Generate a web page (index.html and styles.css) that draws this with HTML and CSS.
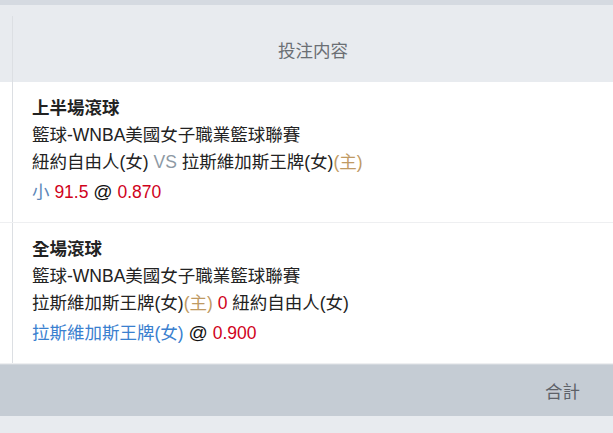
FILE: index.html
```html
<!DOCTYPE html>
<html lang="zh-Hant">
<head>
    <meta charset="UTF-8">
    <meta name="viewport" content="width=device-width, initial-scale=1.0">
    <title>投注内容</title>
    <link rel="stylesheet" href="styles.css">
</head>
<body>
    <div class="top-strip"></div>
    <div class="bet-table">
        <div class="bet-head">
            <div class="side"></div>
            <div class="head-title">投注内容</div>
        </div>

        <div class="bet-row">
            <div class="side"></div>
            <div class="bet-cell">
                <div class="bet-type">上半場滾球</div>
                <div>籃球-WNBA美國女子職業籃球聯賽</div>
                <div>紐約自由人(女) <span class="vs">VS</span> 拉斯維加斯王牌(女)<span class="home">(主)</span></div>
                <div class="odds"><span class="pick-small">小</span> <span class="red">91.5</span> <span class="at">@</span> <span class="red">0.870</span></div>
            </div>
        </div>

        <div class="bet-row">
            <div class="side"></div>
            <div class="bet-cell">
                <div class="bet-type">全場滾球</div>
                <div>籃球-WNBA美國女子職業籃球聯賽</div>
                <div>拉斯維加斯王牌(女)<span class="home">(主)</span> <span class="red">0</span> 紐約自由人(女)</div>
                <div class="odds"><span class="pick">拉斯維加斯王牌(女)</span> <span class="at">@</span> <span class="red">0.900</span></div>
            </div>
        </div>

        <div class="bet-foot">合計</div>
    </div>
</body>
</html>
```

FILE: styles.css
```css
body {
    margin: 0;
    background-color: #e8ebef;
    font-family: "Liberation Sans", "Noto Sans CJK TC", sans-serif;
    font-size: 17.5px;
    color: #222;
}

.top-strip {
    height: 5px;
    background-color: #d5dae1;
}

.bet-head {
    display: flex;
    height: 77px;
}

.bet-head .side {
    margin-top: 11px;
}

.side {
    width: 12px;
    flex-shrink: 0;
    border-right: 1px solid #dcdfe3;
}

.head-title {
    flex: 1;
    display: flex;
    align-items: center;
    justify-content: center;
    color: #6b6f74;
    padding-top: 12px;
}

.bet-row {
    display: flex;
    background-color: #fff;
    border-bottom: 1px solid #eeeff1;
}

.bet-row:last-of-type {
    border-bottom: none;
}

.bet-cell {
    flex: 1;
    padding: 13px 19px 16px;
    line-height: 27px;
}

.bet-type {
    font-weight: bold;
}

.odds {
    margin-top: 2px;
}

.at {
    font-size: 19px;
    color: #111;
}

.vs {
    color: #8d99a4;
}

.home {
    color: #bf9a63;
}

.red {
    color: #d0021b;
}

.pick-small {
    color: #5b86b8;
}

.pick {
    color: #3a80cf;
}

.bet-foot {
    height: 51px;
    border-top: 1px solid #d3d8de;
    background-color: #c5ccd4;
    display: flex;
    align-items: center;
    justify-content: flex-end;
    padding-right: 33px;
    color: #5d6168;
}
```
